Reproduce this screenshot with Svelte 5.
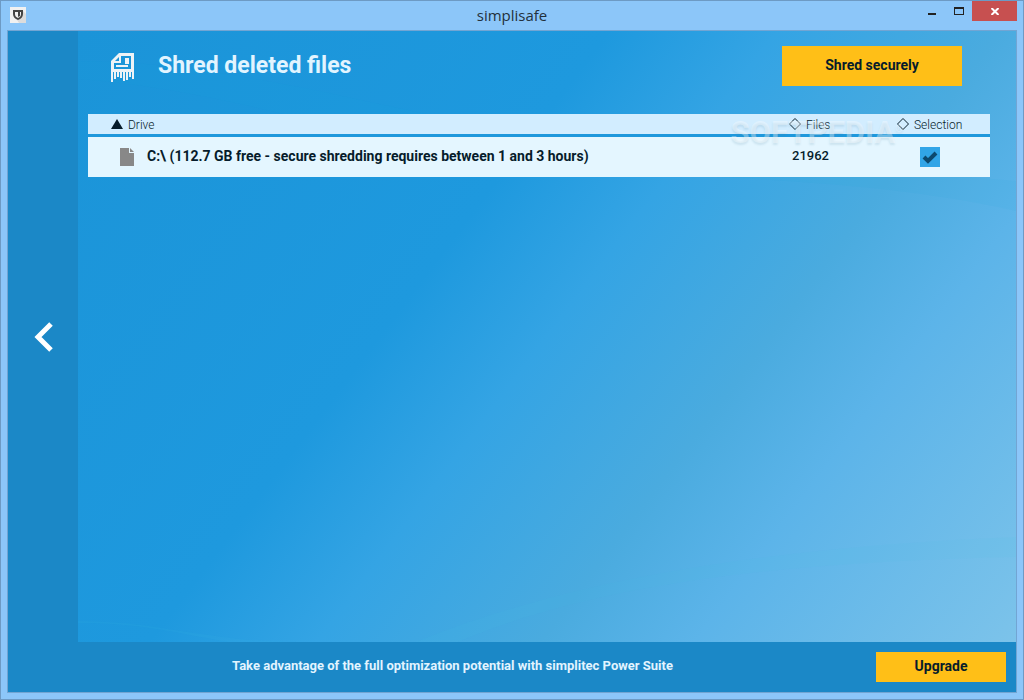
<script lang="ts">
  type Drive = { name: string; files: number; selected: boolean };

  let drives: Drive[] = $state([
    { name: 'C:\\ (112.7 GB free - secure shredding requires between 1 and 3 hours)', files: 21962, selected: true },
  ]);
</script>

<div class="window">
  <header class="titlebar">
    <svg class="app-icon" viewBox="0 0 16 16" width="16" height="16" aria-hidden="true">
      <rect width="16" height="16" fill="#f1f1f1" />
      <path d="M13 4l3 3v9H9l-2-3z" fill="#dcdcdc" />
      <path d="M3 3h10v4c0 3-2 5-5 6-3-1-5-3-5-6z" fill="#444" />
      <path d="M5 5h6v2c0 2-1 3-3 4-2-1-3-2-3-4z" fill="#f1f1f1" />
      <path d="M8 5h2v4l-2 1z" fill="#444" />
    </svg>
    <span class="caption">simplisafe</span>
    <div class="win-btns">
      <button type="button" class="min" aria-label="Minimize">
        <svg viewBox="0 0 8 2" width="8" height="2"><path d="M0 0h8v2H0z" fill="#222" /></svg>
      </button>
      <button type="button" class="max" aria-label="Maximize">
        <svg viewBox="0 0 10 8" width="10" height="8"><path d="M0 0h10v8H0zM1 2v5h8V2z" fill="#222" fill-rule="evenodd" /></svg>
      </button>
      <button type="button" class="close" aria-label="Close">
        <svg viewBox="0 0 8 7" width="8" height="7"><path d="M0.5 0l7 7M7.5 0l-7 7" stroke="#fff" stroke-width="2" /></svg>
      </button>
    </div>
  </header>

  <div class="client">
    <nav class="side">
      <button type="button" class="back" aria-label="Back">
        <svg viewBox="0 0 20 30" width="20" height="30"><path d="M17 2L4 15l13 13" fill="none" stroke="#fff" stroke-width="5" /></svg>
      </button>
    </nav>

    <main>
      <svg class="waves" viewBox="0 0 938 611" preserveAspectRatio="none" aria-hidden="true">
        <path d="M0 48C160 60 280 110 420 130S760 140 938 180V150C700 130 520 120 380 90S120 30 0 30z" fill="#12a5dc" opacity=".06" />
        <path d="M0 590c80 0 130 21 220 21h160c140-60 330-80 558-85v-20c-240 10-440 40-600 105H150C90 600 60 592 0 592z" fill="#40c0e0" opacity=".07" />
      </svg>
      <div class="head">
        <svg class="shred" viewBox="0 0 24 30" width="24" height="30" aria-hidden="true">
          <path fill="#eef3f6" fill-rule="evenodd" d="M8 0h15v19H0V8zM4 8h4V4zM10 3v7H3v6h17V3zM14 5h4v6h-4zM5 12h12v2H5z" />
          <path fill="#eef3f6" d="M0 19h2v10H0zM3 19h2v7H3zM6 19h2v5H6zM9 19h2v6H9zM12 19h2v9h-2zM15 19h2v8h-2zM18 19h2v5h-2zM21 19h2v7h-2z" />
        </svg>
        <h1>Shred deleted files</h1>
        <button type="button" class="action">Shred securely</button>
      </div>

      <div class="list">
        <table>
          <thead>
            <tr>
              <th class="drive" aria-sort="ascending">
                <button type="button">
                  <svg viewBox="0 0 12 10" width="12" height="10"><path d="M6 0l6 10H0z" fill="#061c2b" /></svg>
                  <span>Drive</span>
                </button>
              </th>
              {#each ['Files', 'Selection'] as label}
                <th class={label.toLowerCase()}>
                  <button type="button">
                    <svg viewBox="0 0 12 12" width="12" height="12"><path d="M6 0.5L11.5 6 6 11.5 0.5 6z" fill="none" stroke="#061c2b" /></svg>
                    <span>{label}</span>
                  </button>
                </th>
              {/each}
            </tr>
          </thead>
          <tbody>
            {#each drives as d, i}
              <tr>
                <td>
                  <label class="name" for="drive-{i}">
                    <svg viewBox="0 0 14 18" width="14" height="18" aria-hidden="true">
                      <path d="M0 0h9v5h5v13H0z" fill="#888" />
                      <path d="M10 0l4 4h-4z" fill="#888" />
                    </svg>
                    <span>{d.name}</span>
                  </label>
                </td>
                <td class="count">{d.files}</td>
                <td class="pick"><input id="drive-{i}" type="checkbox" bind:checked={d.selected} /></td>
              </tr>
            {/each}
          </tbody>
        </table>
        <span class="watermark">SOFTPEDIA<sup>®</sup></span>
      </div>
    </main>

    <footer>
      <p>Take advantage of the full optimization potential with simplitec Power Suite</p>
      <button type="button" class="upgrade">Upgrade</button>
    </footer>
  </div>
</div>

<style>
  :global(body) { margin: 0; }
  .window {
    box-sizing: border-box; min-height: 100vh; display: flex; flex-direction: column;
    padding: 0 6px 6px; background: #8cc6f9; border: 1px solid #6d9ac4;
    font-family: Roboto, "Liberation Sans", sans-serif; color: #061c2b;
  }
  button { border: 0; padding: 0; background: none; font: inherit; color: inherit; cursor: pointer; }
  svg { display: block; flex: none; }

  .titlebar {
    position: relative; box-sizing: border-box; height: 29px; display: flex;
    align-items: center; justify-content: space-between; padding: 0 0 2px 3px;
  }
  .caption {
    position: absolute; left: 0; right: 0; text-align: center; pointer-events: none;
    font: 15px "Open Sans", "Noto Sans", sans-serif; color: #23303c;
  }
  .win-btns { display: flex; align-self: flex-start; height: 20px; }
  .win-btns button { width: 27px; display: flex; align-items: center; justify-content: center; }
  .win-btns .min { align-items: flex-end; padding-bottom: 6px; }
  .win-btns .close { width: 45px; background: #c75050; }

  .client {
    flex: 1; display: grid; grid-template: 1fr 50px / 70px 1fr;
    border: 1px solid #72a5d3; background: #1b88c7;
  }
  .side { display: flex; align-items: center; justify-content: center; }
  .back { padding-left: 2px; }

  main {
    position: relative; padding: 15px 26px 0 10px;
    background: linear-gradient(127deg, #1b94d8 0%, #1e99de 38%, #34a4e4 50%, #4aabdf 66%, #5cb4e9 77%, #7cc3ea 100%);
  }
  .waves { position: absolute; inset: 0; width: 100%; height: 100%; }
  .head { position: relative; display: flex; align-items: center; padding: 0 28px 0 23px; }
  .shred { margin-top: 4px; }
  h1 { flex: 1; margin: 0 0 0 23px; font-size: 23px; line-height: 38px; font-weight: 700; color: #e2f4ff; }
  .action { width: 180px; height: 40px; padding-bottom: 2px; background: #ffbf17; font-size: 14px; font-weight: 700; }

  .list { position: relative; margin-top: 28px; }
  table { width: 100%; table-layout: fixed; border-collapse: collapse; }
  th { height: 20px; padding: 0; background: #d2edff; font-size: 12px; font-weight: 300; text-align: left; }
  th.files { width: 108px; }
  th.selection { width: 94px; }
  th button { display: flex; align-items: center; gap: 5px; height: 20px; }
  th span { padding-top: 2px; }
  th.drive button { padding-left: 23px; }
  th:not(.drive) button { padding-left: 1px; }
  tbody tr { border-top: 3px solid #1e98dc; background: #e4f6ff; }
  td { height: 40px; padding: 0; font-size: 14px; font-weight: 700; }
  .name { display: flex; align-items: center; gap: 13px; padding-left: 32px; }
  .name span { padding-bottom: 2px; }
  .count { padding: 0 0 3px 4px; height: 37px; font-size: 13px; font-weight: 500; }
  .pick { padding-left: 24px; }
  .pick input {
    appearance: none; display: block; width: 20px; height: 20px; margin: 0; background: #31a5e7;
  }
  .pick input:checked {
    background: #31a5e7 url("data:image/svg+xml,%3Csvg xmlns='http://www.w3.org/2000/svg' viewBox='0 0 20 20'%3E%3Cpath d='M4 10l4 4 8-8' fill='none' stroke='%230c496e' stroke-width='4'/%3E%3C/svg%3E");
  }
  .watermark {
    position: absolute; right: 87px; top: 0; pointer-events: none;
    font-size: 31px; line-height: 38px; font-weight: 700; color: #ffffff59;
    text-shadow: 0 2px 2px #4a7d9a26;
  }
  .watermark sup { font-size: 10px; line-height: 0; }

  footer { grid-column: 1 / -1; display: flex; align-items: center; padding-right: 10px; }
  footer p { flex: 1; margin: 0; padding: 0 0 3px 21px; text-align: center; font-size: 13px; font-weight: 700; color: #e2f4ff; }
  .upgrade { width: 130px; height: 30px; padding-bottom: 2px; background: #ffbf17; font-size: 14px; font-weight: 700; }
</style>
